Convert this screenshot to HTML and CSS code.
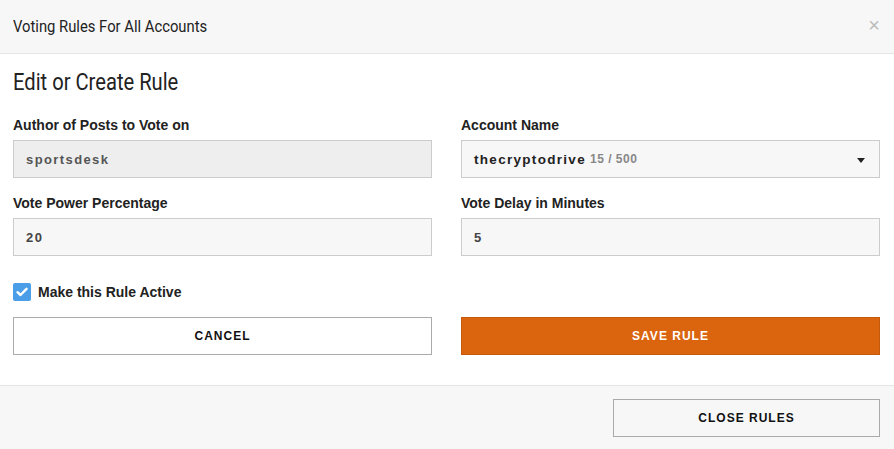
FILE: index.html
```html
<!DOCTYPE html>
<html>
<head>
<meta charset="utf-8">
<link rel="stylesheet" href="styles.css">
</head>
<body>
<div class="modal">
  <div class="modal-header">
    <div class="modal-title">Voting Rules For All Accounts</div>
    <div class="close">&times;</div>
  </div>
  <div class="modal-body">
    <h2 class="section-title">Edit or Create Rule</h2>
    <div class="grid">
      <div class="field">
        <label class="label">Author of Posts to Vote on</label>
        <div class="input disabled">sportsdesk</div>
      </div>
      <div class="field">
        <label class="label">Account Name</label>
        <div class="input select"><span class="acct">thecryptodrive</span><span class="count">15 / 500</span><span class="caret"></span></div>
      </div>
      <div class="field">
        <label class="label">Vote Power Percentage</label>
        <div class="input">20</div>
      </div>
      <div class="field">
        <label class="label">Vote Delay in Minutes</label>
        <div class="input">5</div>
      </div>
    </div>
    <div class="check-row">
      <span class="checkbox"><svg width="12" height="10" viewBox="0 0 12 10"><path d="M1.5 5.2 L4.5 8 L10.5 1.8" fill="none" stroke="#fff" stroke-width="2.4" stroke-linecap="round" stroke-linejoin="round"/></svg></span>
      <span class="check-label">Make this Rule Active</span>
    </div>
    <div class="grid buttons">
      <button class="btn btn-default">CANCEL</button>
      <button class="btn btn-primary">SAVE RULE</button>
    </div>
  </div>
  <div class="modal-footer">
    <button class="btn btn-default footer-btn">CLOSE RULES</button>
  </div>
</div>
</body>
</html>
```
FILE: styles.css
```css
* { box-sizing: border-box; }
html, body { margin: 0; padding: 0; background: #fff; }
body { font-family: "Liberation Sans", Arial, sans-serif; color: #222; width: 894px; height: 449px; overflow: hidden; }
.modal { display: flex; flex-direction: column; height: 449px; }
.modal-header {
  height: 54px;
  background: #f7f7f7;
  border-bottom: 1px solid #e5e5e5;
  display: flex;
  align-items: center;
  justify-content: space-between;
  padding: 0 13px;
}
.modal-title {
  font-family: Roboto, "Liberation Sans", sans-serif;
  font-size: 17px;
  color: #222;
  transform: scaleX(0.87);
  transform-origin: left center;
  margin-top: -1px;
  white-space: nowrap;
}
.close { font-size: 20px; color: #bbb; line-height: 1; margin-right: 1px; margin-top: -4px; }
.modal-body { padding: 0 14px 0 13px; flex: 1; }
.section-title {
  font-family: Roboto, "Liberation Sans", sans-serif;
  font-weight: normal;
  font-size: 24px;
  margin: 14px 0 4px;
  line-height: 28px;
  color: #222;
  transform: scaleX(0.84);
  transform-origin: left center;
  white-space: nowrap;
}
.grid { display: grid; grid-template-columns: 419px 419px; column-gap: 29px; }
.field { display: flex; flex-direction: column; }
.label { font-size: 14px; font-weight: bold; color: #222; margin-top: 16px; line-height: 16px; height: 20px; padding-top: 1px; margin-bottom: 4px; }
.input {
  height: 38px;
  border: 1px solid #ccc;
  background: #f7f7f7;
  display: flex;
  align-items: center;
  padding: 0 12px;
  font-size: 13px;
  font-weight: bold;
  color: #444;
  letter-spacing: 1.4px;
}
.input.disabled { background: #eee; color: #555; }
.select { position: relative; color: #222; }
.acct { letter-spacing: 1.3px; font-size: 13.5px; }
.count { font-size: 12px; color: #888; margin-left: 4px; letter-spacing: 0.5px; }
.caret {
  position: absolute;
  right: 14px;
  top: 17px;
  width: 0; height: 0;
  border-left: 4px solid transparent;
  border-right: 4px solid transparent;
  border-top: 5px solid #222;
}
.check-row { display: flex; align-items: center; margin-top: 27px; height: 18px; }
.checkbox { width: 18px; height: 18px; background: #4a9ee8; border-radius: 2px; display: flex; align-items: center; justify-content: center; }
.check-label { font-size: 14px; font-weight: bold; margin-left: 7px; color: #222; }
.buttons { margin-top: 16px; }
.btn {
  height: 38px;
  font-family: "Liberation Sans", Arial, sans-serif;
  font-size: 12px;
  font-weight: bold;
  letter-spacing: 1px;
  border: 1px solid #aaa;
  background: #fff;
  color: #111;
  cursor: pointer;
  padding: 0;
}
.btn-primary { background: #db640f; border-color: #c55a0c; color: #fff; }
.modal-footer {
  height: 64px;
  background: #f7f7f7;
  border-top: 1px solid #e5e5e5;
  display: flex;
  align-items: center;
  justify-content: flex-end;
  padding: 0 14px 0 13px;
  margin-top: 15px;
}
.footer-btn { width: 267px; background: #f7f7f7; }
```
